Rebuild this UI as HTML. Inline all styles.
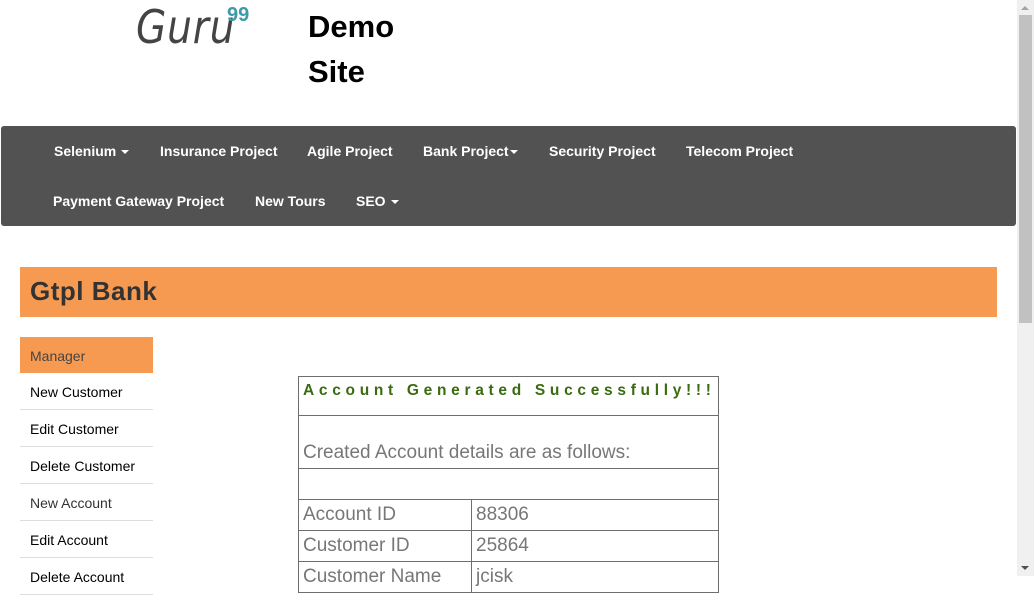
<!DOCTYPE html>
<html><head><meta charset="utf-8"><style>
*{margin:0;padding:0;box-sizing:border-box}
body{width:1034px;height:576px;overflow:hidden;background:#fff;font-family:"Liberation Sans",Arial,sans-serif;position:relative}
.abs{position:absolute}
.logo{left:136px;top:0px;font-family:"Comic Sans MS","DejaVu Sans",cursive;font-size:46px;color:#444;font-style:italic;letter-spacing:1px;transform:scaleX(0.85);transform-origin:left}
.sup{left:227px;top:4px;font-size:20px;font-weight:bold;color:#3d9aa8}
.demo{left:308px;top:4px;font-size:31px;font-weight:bold;line-height:45px;color:#000}
.nav{left:1px;top:126px;width:1015px;height:100px;background:#525252;border-radius:3px}
.nav span{position:absolute;color:#fff;font-weight:bold;font-size:14px}
.caret{display:inline-block;width:0;height:0;border-left:4px solid transparent;border-right:4px solid transparent;border-top:4px solid #fff;vertical-align:middle;margin-left:5px}
.bank{left:20px;top:267px;width:977px;height:50px;background:#f79a51;font-size:26px;font-weight:bold;color:#333;padding:9px 0 0 10px;font-family:"Liberation Sans","DejaVu Sans",sans-serif;letter-spacing:0.5px}
.menu{left:20px;top:337px;width:133px}
.menu div{height:37px;border-bottom:1px solid #ddd;font-size:14px;color:#000;padding:11px 0 0 10px}
.menu div.act{background:#f79a51;color:#444;border-bottom:none;height:36px}
table{position:absolute;left:298px;top:376px;width:421px;border-collapse:collapse;font-size:19px;color:#777;table-layout:fixed}
td{border:1px solid #6e6e6e;padding:0 4px;height:31px;white-space:nowrap;overflow:hidden}
.sb{left:1017px;top:0;width:17px;height:576px;background:#f0f0f0}
.thumb{left:1019px;top:15px;width:13px;height:308px;background:#c1c1c1}
</style></head><body>
<div class="abs logo">Guru</div>
<div class="abs sup">99</div>
<div class="abs demo">Demo<br>Site</div>
<div class="abs nav">
<span style="left:53px;top:17px">Selenium<i class="caret"></i></span>
<span style="left:159px;top:17px">Insurance Project</span>
<span style="left:306px;top:17px">Agile Project</span>
<span style="left:422px;top:17px">Bank Project<i class="caret" style="margin-left:1px"></i></span>
<span style="left:548px;top:17px">Security Project</span>
<span style="left:685px;top:17px">Telecom Project</span>
<span style="left:52px;top:67px">Payment Gateway Project</span>
<span style="left:254px;top:67px">New Tours</span>
<span style="left:355px;top:67px">SEO<i class="caret"></i></span>
</div>
<div class="abs bank">Gtpl Bank</div>
<div class="abs menu">
<div class="act">Manager</div>
<div>New Customer</div><div>Edit Customer</div><div>Delete Customer</div>
<div style="color:#333">New Account</div><div>Edit Account</div><div>Delete Account</div>
</div>
<table>
<colgroup><col style="width:173px"><col></colgroup>
<tr><td colspan="2" style="height:39px;color:#3a6b10;font-weight:bold;font-size:15.5px;letter-spacing:4.7px;vertical-align:top;padding-top:5px">Account Generated Successfully!!!</td></tr>
<tr><td colspan="2" style="height:53px;vertical-align:bottom;padding-bottom:4px">Created Account details are as follows:</td></tr>
<tr><td colspan="2"></td></tr>
<tr><td>Account ID</td><td>88306</td></tr>
<tr><td>Customer ID</td><td>25864</td></tr>
<tr><td>Customer Name</td><td>jcisk</td></tr>
</table>
<div class="abs sb"></div>
<div class="abs thumb"></div>
<div class="abs" style="left:1021px;top:6px;border-left:4px solid transparent;border-right:4px solid transparent;border-bottom:4px solid #a3a3a3"></div>
<div class="abs" style="left:1021px;top:566px;border-left:4px solid transparent;border-right:4px solid transparent;border-top:4px solid #505050"></div>
</body></html>
